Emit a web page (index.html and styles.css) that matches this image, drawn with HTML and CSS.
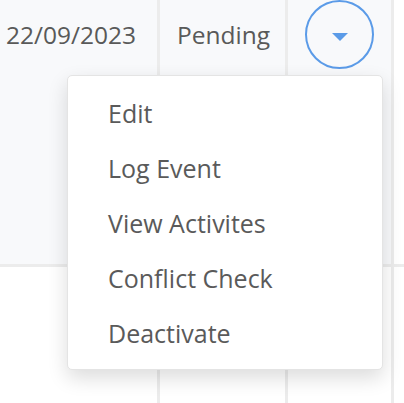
FILE: index.html
```html
<!DOCTYPE html>
<html>
<head>
<meta charset="utf-8">
<link rel="stylesheet" href="styles.css">
</head>
<body>
<div class="table">
  <div class="row row-active">
    <div class="cell cell-date">22/09/2023</div>
    <div class="cell cell-status">Pending</div>
    <div class="cell cell-action">
      <button class="toggle" aria-label="Actions">
        <svg width="16" height="8" viewBox="0 0 16 8"><path d="M0 0 H16 L8 8 Z" fill="#5b9be8"/></svg>
      </button>
    </div>
    <div class="cell cell-rest"></div>
  </div>
  <div class="row">
    <div class="cell cell-date"></div>
    <div class="cell cell-status"></div>
    <div class="cell cell-action"></div>
    <div class="cell cell-rest"></div>
  </div>
</div>
<ul class="menu">
  <li class="menu-item">Edit</li>
  <li class="menu-item">Log Event</li>
  <li class="menu-item">View Activites</li>
  <li class="menu-item">Conflict Check</li>
  <li class="menu-item">Deactivate</li>
</ul>
</body>
</html>
```
FILE: styles.css
```css
html, body {
  margin: 0;
  padding: 0;
  background: #ffffff;
  overflow: hidden;
}
body {
  width: 404px;
  height: 403px;
  position: relative;
  font-family: "Open Sans", "Noto Sans", sans-serif;
  font-size: 24.5px;
  color: #595959;
}
.table {
  display: flex;
  flex-direction: column;
}
.row {
  display: flex;
  height: 140px;
}
.row-active {
  height: 264px;
  background: #f8f9fb;
  border-bottom: 3px solid #ececec;
}
.cell {
  box-sizing: border-box;
  border-right: 3px solid #ececec;
}
.cell-date {
  width: 160px;
  padding: 18px 0 0 6px;
  line-height: 34px;
}
.cell-status {
  width: 128px;
  padding: 18px 0 0 17px;
  line-height: 34px;
}
.cell-action {
  width: 106px;
  display: flex;
  justify-content: center;
  padding-right: 2px;
}
.cell-rest {
  flex: 1;
  border-right: none;
  background: #ffffff;
}
.toggle {
  width: 69px;
  height: 69px;
  margin-left: 2px;
  border-radius: 50%;
  border: 2px solid #5b9be8;
  background: transparent;
  display: flex;
  align-items: center;
  justify-content: center;
  padding: 4px 0 0 0;
  box-sizing: border-box;
}
.toggle svg {
  display: block;
}
.menu {
  position: absolute;
  left: 67px;
  top: 75px;
  width: 316px;
  height: 295px;
  box-sizing: border-box;
  margin: 0;
  padding: 10px 0;
  list-style: none;
  background: #ffffff;
  border: 1px solid #e4e4e4;
  border-radius: 5px;
  box-shadow: 0 8px 20px rgba(0, 0, 0, 0.14);
}
.menu-item {
  height: 55px;
  line-height: 55px;
  padding-left: 40px;
  font-size: 25px;
  color: #5a5a5a;
}
```
